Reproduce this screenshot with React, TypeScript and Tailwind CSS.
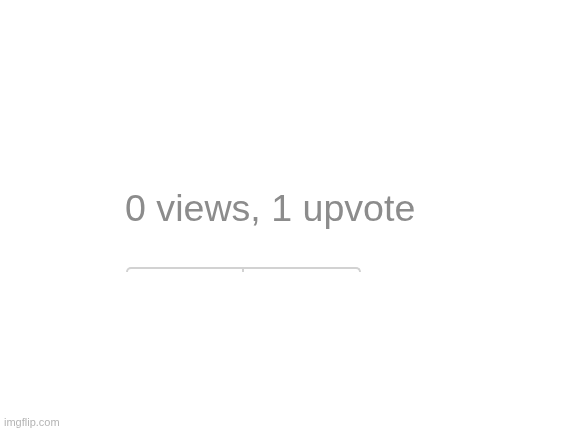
import React from 'react';

const App: React.FC = () => {
  return (
    <div className="relative w-[577px] h-[433px] overflow-hidden bg-white font-['Liberation_Sans',Arial,sans-serif]">
      {/* Stats line with the top edge of the button bar beneath it */}
      <div className="pt-[190px] pl-[125px] flex flex-col">
        <p className="text-[37.6px] leading-none text-[#8c8c8c] blur-[0.5px]">0 views, 1 upvote</p>
        <div className="mt-[39px] ml-[1px] flex w-[235px] h-[5px] rounded-t-[7px] border-t-2 border-x-2 border-[#d2d2d2] blur-[0.6px]">
          <div className="w-[116px] border-r-2 border-[#d2d2d2]" />
          <div className="flex-1" />
        </div>
      </div>

      <span className="absolute left-[4px] bottom-[5px] text-[11px] leading-none text-[#b4b4b4] blur-[0.3px]">imgflip.com</span>
    </div>
  );
};

export default App;
